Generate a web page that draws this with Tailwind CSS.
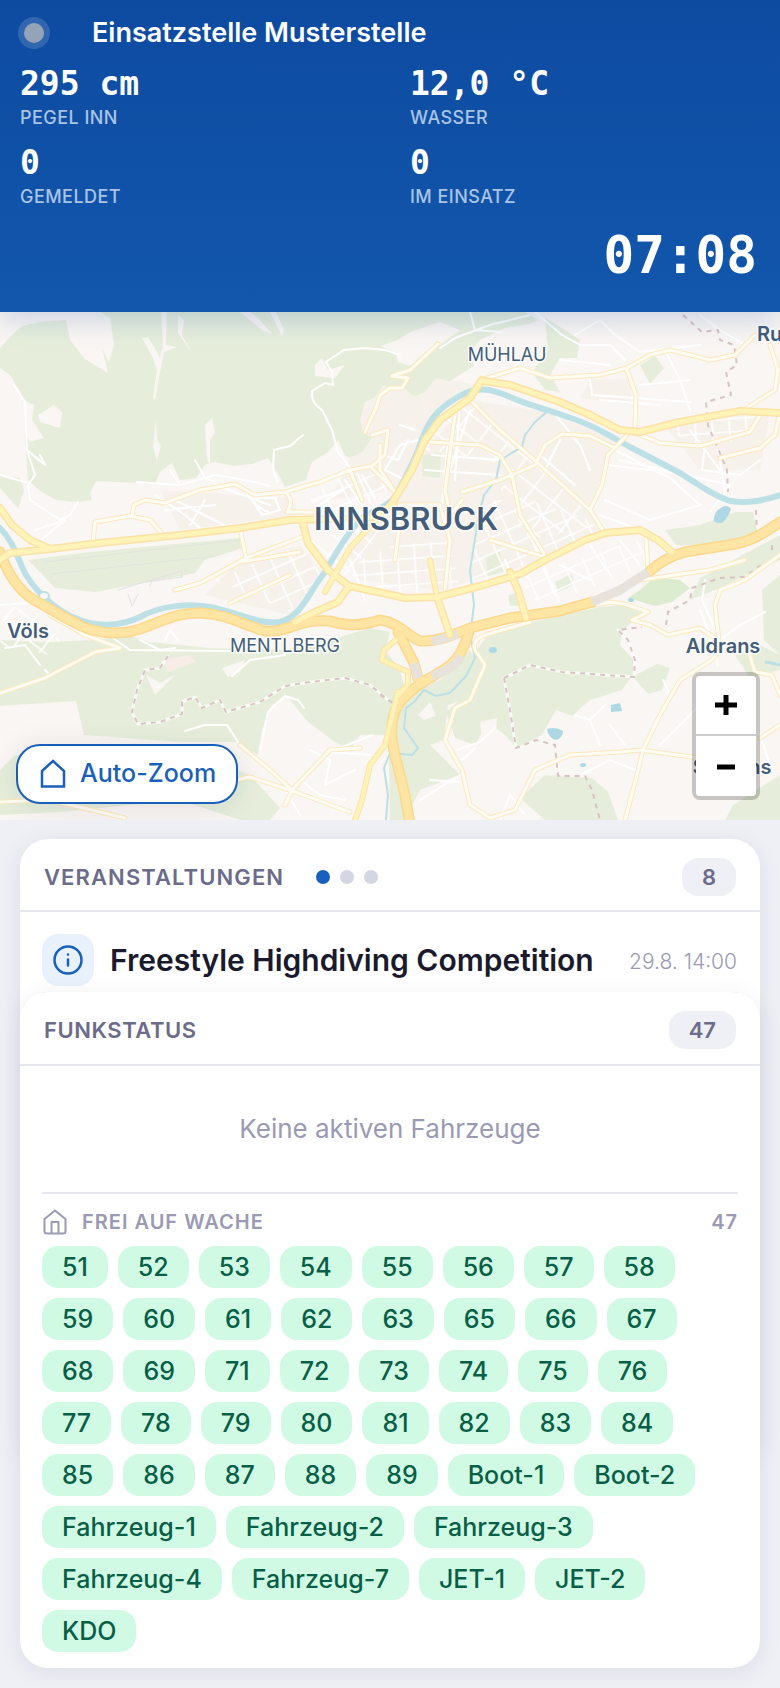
<!DOCTYPE html>
<html lang="de">
<head>
  <meta charset="UTF-8">
  <meta name="viewport" content="width=device-width, initial-scale=1.0">
  <title>Einsatzstelle Musterstelle</title>
  <script src="https://cdn.jsdelivr.net/npm/@tailwindcss/browser@4"></script>
</head>
<body class="font-['Inter',sans-serif] bg-[#eff0f6] text-[#1a1a2e]">
  <!-- Header -->
  <header class="relative z-10 bg-linear-to-b from-[#0d4ba1] to-[#1257ac] text-white px-5 pt-4 pb-7 shadow-[0_4px_30px_rgba(13,71,161,0.25)]">
    <div class="flex items-center gap-11 h-[34px]">
      <span class="size-5 m-1 rounded-full bg-[#94a3b8] ring-[6px] ring-white/15"></span>
      <h1 class="text-[27px] leading-[34px] font-semibold">Einsatzstelle Musterstelle</h1>
    </div>
    <dl class="grid grid-cols-2 gap-x-10 gap-y-[11px] mt-[14px]">
      <div class="flex flex-col-reverse">
        <dt class="text-lg leading-7 font-medium tracking-wide text-[#aac4e6]">PEGEL INN</dt>
        <dd class="font-['DejaVu_Sans_Mono',monospace] text-[33px] leading-10 font-bold">295 cm</dd>
      </div>
      <div class="flex flex-col-reverse">
        <dt class="text-lg leading-7 font-medium tracking-wide text-[#aac4e6]">WASSER</dt>
        <dd class="font-['DejaVu_Sans_Mono',monospace] text-[33px] leading-10 font-bold">12,0 °C</dd>
      </div>
      <div class="flex flex-col-reverse">
        <dt class="text-lg leading-7 font-medium tracking-wide text-[#aac4e6]">GEMELDET</dt>
        <dd class="font-['DejaVu_Sans_Mono',monospace] text-[33px] leading-10 font-bold">0</dd>
      </div>
      <div class="flex flex-col-reverse">
        <dt class="text-lg leading-7 font-medium tracking-wide text-[#aac4e6]">IM EINSATZ</dt>
        <dd class="font-['DejaVu_Sans_Mono',monospace] text-[33px] leading-10 font-bold">0</dd>
      </div>
    </dl>
    <time class="block mt-4 pr-[3px] text-right font-['DejaVu_Sans_Mono',monospace] text-[51px] leading-[57px] font-bold">07:08</time>
  </header>

  <!-- Map -->
  <section class="relative overflow-hidden" aria-label="Karte">
    <svg class="block w-full h-[508px]" viewBox="0 312 780 508" preserveAspectRatio="xMidYMid slice" fill="none" stroke-linejoin="round" stroke-linecap="round">
      <defs>
        <pattern id="blocks" width="17" height="13" patternUnits="userSpaceOnUse" patternTransform="rotate(-4)">
          <path d="M0 0H17M0 0V13" stroke="#fff" stroke-width="3"/>
        </pattern>
        <pattern id="blocks-tilt" width="19" height="15" patternUnits="userSpaceOnUse" patternTransform="rotate(-24)">
          <path d="M0 0H19M0 0V15" stroke="#fff" stroke-width="3"/>
        </pattern>
        <pattern id="blocks-diag" width="24" height="18" patternUnits="userSpaceOnUse" patternTransform="rotate(38)">
          <path d="M0 0H24M0 0V18" stroke="#fff" stroke-width="3"/>
        </pattern>
      </defs>
      <rect y="312" width="780" height="508" fill="#faf6f3"/>

      <!-- Built-up areas -->
      <g fill="#f7f1eb">
        <path d="M400 345L450 380 478 385 440 410 420 445 400 490 330 500 350 460 362 400Z"/>
        <path d="M425 450L470 400 545 412 615 440 590 510 600 530 545 560 440 590 360 580 345 550 395 500Z"/>
        <path d="M160 490L290 498 300 515 180 530Z"/>
        <path d="M235 565L300 545 325 575 290 615 205 595Z"/>
        <path d="M590 380L630 378 632 405 580 398Z"/>
        <path d="M660 420L770 412 760 470 700 470Z"/>
      </g>

      <!-- Forest and parks -->
      <g fill="#e6eedb">
        <path d="M22 326L40 322 66 320 70 340 85 359 108 373 102 348 109 362 114 345 110 318 100 312H525L538 320 530 324 505 328 480 340 470 352 474 366 450 381 436 378 425 392 414 396 406 390 400 385 390 390 384 385 374 398 365 402 360 420 363 432 372 438 362 452 350 458 345 456 338 440 328 452 312 462 306 480 285 487 276 470 268 458 252 464 233 466 214 462 206 464 196 478 180 480 172 463 160 472 155 484 138 483 96 481 90 494 92 500 78 502 56 500 40 491 28 480 26 452 22 395 10 375 0 368V348L12 335Z"/>
        <path d="M0 475L20 478 24 490 18 508 0 488Z"/>
        <path d="M545 318L565 330 580 340 577 358 560 358 550 375 560 392 545 390 532 372 548 350Z"/>
        <path d="M640 365L655 356 664 368 650 384Z"/>
        <path d="M28 560L90 552 240 538 243 548 205 560 195 573 160 580 95 592 55 588 40 572Z"/>
        <path d="M0 640L50 642 95 640 130 636 150 642 210 648 290 650 330 640 370 628 390 632 385 650 400 670 405 690 393 715 390 735 360 735 350 750 335 742 308 722 286 695 272 705 262 730 258 755 236 742 180 742 84 735 76 701 0 706Z"/>
        <path d="M0 770L15 755 85 745 180 748 250 775 280 808 270 820H240L180 800 60 812 0 815Z"/>
        <path d="M478 648L490 632 540 620 600 607 632 604 642 612 622 632 620 645 634 660 634 676 657 664 670 668 662 690 648 694 632 676 622 690 590 700 572 716 556 710 542 735 516 748 505 735 488 722 475 745 455 738 446 712 462 698 470 672Z"/>
        <path d="M520 798L545 775 592 778 608 792 618 820H545Z"/>
        <path d="M388 690L440 680 470 650 482 672 462 700 448 705 444 740 430 745 460 775 420 790 405 820H390Z"/>
        <path d="M665 530L700 525 735 512 753 512 757 532 710 546 676 545Z"/>
        <path d="M700 578L780 535V560L752 572 720 588 690 600Z"/>
        <path d="M762 590L780 575V655L764 640Z"/>
        <path d="M735 655L760 645 780 655V670L750 678Z"/>
        <path d="M733 805L780 775V820H725Z"/>
        <path d="M423 455L441 453 440 478 422 476Z"/>
        <path d="M485 555L500 552 504 572 488 576Z"/>
        <path d="M555 582L572 574 574 585 558 592Z"/>
        <path d="M508 595L516 593 518 606 510 606Z"/>
      </g>
      <path d="M640 590L655 577 680 580 690 588 672 602 655 606 628 598Z" fill="#dcedcf"/>

      <!-- Clearings in the forest -->
      <g fill="#faf6f3">
        <path d="M142 338L148 337 156 350 160 358 163 345 161 312H167L166 345 177 347 164 352 160 372 155 400 153 398 157 370 152 356Z"/>
        <path d="M178 315L184 320 182 335 191 352 178 333Z"/>
        <path d="M38 415L54 405 62 412 60 428 40 422Z"/>
        <path d="M23 400L34 405 32 420 44 438 30 442 20 425Z"/>
        <path d="M156 420L157 440 161 446 157 461 153 446Z"/>
        <path d="M205 425L212 418 215 432 210 440 210 465 207 460Z"/>
        <path d="M315 365L322 358 328 370 345 365 335 378 315 376Z"/>
        <path d="M380 346L398 340 410 332 440 322 460 330 440 345 425 352 410 366 398 362 395 352Z"/>
        <path d="M222 668L245 660 240 672 228 677Z"/>
        <path d="M146 675L160 683 176 674 155 695Z"/>
        <path d="M480 722L497 718 496 735 482 738Z"/>
        <path d="M418 715L430 702 436 716 424 720Z"/>
        <path d="M240 312L262 330 272 334 258 318 250 312ZM270 312L282 336 284 330 276 312Z"/>
      </g>
      <path d="M162 660L190 655 195 662 168 672Z" fill="#f7ece6"/>

      <!-- Street grids -->
      <path d="M360 560L395 545 450 540 460 590 400 596 350 582Z" fill="url(#blocks)"/>
      <path d="M480 500L530 500 590 520 600 532 545 560 470 588 475 540Z" fill="url(#blocks-tilt)"/>
      <path d="M425 450L440 420 470 402 540 465 515 485 490 460Z" fill="url(#blocks-diag)"/>
      <path d="M215 580L300 545 322 575 290 612Z" fill="url(#blocks-tilt)"/>
      <path d="M520 575L640 540 650 565 560 600 530 600Z" fill="url(#blocks-tilt)"/>
      <path d="M500 488L540 468 590 512 595 525 530 540Z" fill="url(#blocks-diag)"/>
      <path d="M660 420L755 414 745 440 690 445Z" fill="url(#blocks)"/>
      <path d="M5 605L35 612 60 640 50 655 0 645Z" fill="url(#blocks-diag)"/>
      <path d="M310 495L345 475 375 470 390 490 355 515 315 520Z" fill="url(#blocks-tilt)"/>
      <path d="M310 540L355 520 385 525 345 580Z" fill="url(#blocks-diag)"/>

      <!-- Airport -->
      <path d="M45 562L240 540M52 574L215 556" stroke="#e0e5dd" stroke-width="1"/>
      <path d="M118 590L145 582 182 577M128 594L132 606 138 594M150 586L152 580 182 571V577" stroke="#e3e1e3" stroke-width="1"/>

      <!-- Small roads -->
      <g stroke="#fff" stroke-width="2">
        <path d="M312 391L325 383 333 385 332 372 326 362 344 350 365 348 385 350 400 355M312 391Q310 402 322 410L332 430 338 452 345 460 350 468"/>
        <path d="M303 435L290 446 274 450 273 470 278 482"/>
        <path d="M137 482L180 485 215 475 245 480 270 486M195 460L205 478 215 482M180 485L170 470"/>
        <path d="M14 385L25 402 27 450 35 475 28 485 30 500 60 520 70 515 78 502M0 475L25 482M35 530L65 520 35 545M27 450L45 465 40 455"/>
        <path d="M155 495L185 515 200 528M175 500L230 528M165 510L215 505M205 500L190 525M270 505L215 485M245 490L262 515 280 510"/>
        <path d="M248 488Q250 505 268 512M255 498L275 498 280 510M312 500L340 492M320 505L350 485M345 480L362 505M362 475L375 498"/>
        <path d="M405 480L385 470 400 445 418 440M408 440L398 460 383 455M400 425L415 430"/>
        <path d="M440 348L455 338 490 325 530 315M470 312L475 330 500 332M535 312L562 335 580 345 610 345 625 360M575 335L600 320 615 335 640 352 700 345M560 360L610 365"/>
        <path d="M665 350L680 380 690 410M590 380L592 395 690 402M600 400L660 405M640 385L690 380M700 315L720 330 745 345"/>
        <path d="M615 450L670 478 700 505 650 520 605 500M620 460L730 485 710 512M608 465L690 475M600 515L640 530"/>
        <path d="M705 445L702 470 740 475 760 460M718 450L725 490M690 430L720 470"/>
        <path d="M460 400L455 480M425 470L500 475M432 455L500 460M448 440L442 505M470 410L450 470"/>
        <path d="M553 412L580 445 590 470M540 455L575 485M560 440L545 470"/>
        <path d="M185 731L205 725 227 725 240 745 250 752M260 750L268 712 285 696 298 700 304 708"/>
        <path d="M232 676L250 660 285 655M140 640L160 650 175 648M165 640L170 630 178 640"/>
        <path d="M0 605L30 603 70 615 110 636 130 650 230 651M40 665L25 645 5 648M45 670L50 676"/>
        <path d="M310 750L330 760 325 785 355 770M300 780L320 795 345 800M285 790L300 815M330 752L372 735M330 752L370 755"/>
        <path d="M457 750L480 742 495 728M462 760L475 748M430 780L460 782M420 800L460 775M575 715L590 720 600 745M590 720L605 705M610 725L625 745"/>
        <path d="M700 610L712 640 718 665M720 640L740 625 765 612M705 580L702 600 720 640M663 680L670 695M660 745L700 705M500 820L510 795 525 815M580 775L610 760 635 770M760 735L770 765"/>
        <path d="M505 560L520 595M530 535L555 595M560 565L590 580M590 545L610 575M620 540L640 565M350 560L365 600"/>
      </g>

      <!-- Municipal boundaries -->
      <g stroke="#fff" stroke-opacity=".7" stroke-width="3">
        <path d="M168 656L160 668 145 670 137 690 132 712 138 724 160 722 182 714 182 702 195 697 202 708 220 700 226 712 260 702 285 686 310 682 345 678 370 685 393 704"/>
        <path d="M504 678L530 665 562 672 634 677 635 660 628 640 618 630M504 678L510 710 516 748"/>
      </g>
      <g stroke="#d8c3c3" stroke-width="2" stroke-dasharray="5 5" stroke-linecap="butt">
        <path d="M168 656L160 668 145 670 137 690 132 712 138 724 160 722 182 714 182 702 195 697 202 708 220 700 226 712 260 702 285 686 310 682 345 678 370 685 393 704"/>
        <path d="M504 678L530 665 562 672 634 677 635 660 628 640 618 630 642 627M504 678L510 710 516 748 536 740 555 745 558 776 585 776 592 790 600 820"/>
        <path d="M683 315L702 332 718 330 720 340 734 345 737 365 726 372 731 395 706 402 708 425 727 470 728 492M756 510L757 538M772 545V555"/>
        <path d="M666 625L668 612 690 600 692 588 720 578 745 577 762 564M380 695L395 704"/>
      </g>

      <!-- Rivers and lakes -->
      <g stroke="#bde0e6">
        <path d="M0 528C14 542 18 560 26 575C40 597 60 612 75 618C95 628 122 626 140 617C160 606 190 602 215 608C240 614 262 625 280 622C302 616 306 596 325 572C338 550 350 528 365 516C378 508 388 506 394 498C405 478 410 470 418 450C428 420 436 410 458 397C475 386 490 388 510 397C530 406 550 410 562 415C590 424 600 430 630 447L680 473C700 486 715 496 730 501C750 504 765 500 780 495" stroke-width="6"/>
        <path d="M549 410L535 422 525 435 522 447 500 460 496 480 484 495 478 520 474 545 470 570 474 605 470 635 475 658 466 676 450 693 436 696 424 690 414 702 406 708 404 728 418 748 412 755 390 753 384 768 388 795 386 820" stroke-width="2"/>
        <path d="M766 662L780 665" stroke-width="3"/>
      </g>
      <g fill="#aed9e4">
        <path d="M716 512Q726 502 731 509 728 518 722 523 712 524 714 517Z"/>
        <path d="M547 729Q556 726 563 731 563 738 556 740 548 738 547 729Z"/>
        <path d="M611 705L620 703 622 711 611 712Z"/>
        <ellipse cx="493" cy="650" rx="4" ry="3"/>
        <ellipse cx="631" cy="600" rx="3" ry="2"/>
        <ellipse cx="583" cy="765" rx="3" ry="2"/>
        <ellipse cx="44" cy="596" rx="5" ry="4" fill="#faf6f3" stroke="#bde0e6" stroke-width="2"/>
      </g>

      <!-- Local roads: casing, then fill -->
      <g stroke="#fce8bd" stroke-width="5">
        <path d="M132 516L134 505 145 500 165 503 200 490 235 484 255 495 285 492 320 482 350 470 372 466 385 455 388 430 372 435M93 543L95 522 130 516 150 520 165 537M285 492Q295 500 287 512H320M390 388L402 388 408 378 392 376 410 370 438 344M365 432L376 408 380 395 390 388M350 470L362 500M372 468L395 492M484 379L520 368 550 378 600 375 627 368 650 355 670 350 710 360 735 355 755 335M627 370L636 395 635 428M633 432L660 443 700 446 750 432 762 412M720 458L760 448 775 435 780 412M770 345L778 370 775 390 742 411"/>
        <path d="M470 400L500 430 540 465 590 510 606 535M430 442L480 445 500 455 512 475 520 515 545 555M462 492L500 480 535 465 545 445 562 434 590 436 615 448M628 434L608 455 602 485 590 510M455 415L445 490 450 515 462 500M240 528L246 558 302 537M215 575L246 558M380 445V470L395 492M393 505L440 505 450 540 445 590M490 540L545 557M400 520L395 560M646 538L648 570M175 590L200 583 240 562 300 552M230 603L290 575"/>
        <path d="M0 693L45 678 95 652 120 648 85 635 50 615M236 780L250 777 290 790 350 812M240 745L270 770 292 790 330 750 360 748M0 802L50 800 125 818M292 790L285 805"/>
        <path d="M525 618L570 610 610 602 625 604 648 612 632 620 650 625 668 635 700 628 718 640M530 622L485 635Q472 640 475 650L485 665 470 700 455 708 445 740 462 770 470 805 490 818 515 810 535 770 570 755 620 752 640 750 700 758M643 750L660 715 680 680 712 660 720 650 715 605 720 590 745 580 780 555M643 750L637 775 625 820M640 580L710 570 745 560M748 650L755 672 772 675 780 695M760 738L780 725"/>
      </g>
      <g stroke="#fffdf3" stroke-width="3">
        <path d="M132 516L134 505 145 500 165 503 200 490 235 484 255 495 285 492 320 482 350 470 372 466 385 455 388 430 372 435M93 543L95 522 130 516 150 520 165 537M285 492Q295 500 287 512H320M390 388L402 388 408 378 392 376 410 370 438 344M365 432L376 408 380 395 390 388M350 470L362 500M372 468L395 492M484 379L520 368 550 378 600 375 627 368 650 355 670 350 710 360 735 355 755 335M627 370L636 395 635 428M633 432L660 443 700 446 750 432 762 412M720 458L760 448 775 435 780 412M770 345L778 370 775 390 742 411"/>
        <path d="M470 400L500 430 540 465 590 510 606 535M430 442L480 445 500 455 512 475 520 515 545 555M462 492L500 480 535 465 545 445 562 434 590 436 615 448M628 434L608 455 602 485 590 510M455 415L445 490 450 515 462 500M240 528L246 558 302 537M215 575L246 558M380 445V470L395 492M393 505L440 505 450 540 445 590M490 540L545 557M400 520L395 560M646 538L648 570M175 590L200 583 240 562 300 552M230 603L290 575"/>
        <path d="M0 693L45 678 95 652 120 648 85 635 50 615M236 780L250 777 290 790 350 812M240 745L270 770 292 790 330 750 360 748M0 802L50 800 125 818M292 790L285 805"/>
        <path d="M525 618L570 610 610 602 625 604 648 612 632 620 650 625 668 635 700 628 718 640M530 622L485 635Q472 640 475 650L485 665 470 700 455 708 445 740 462 770 470 805 490 818 515 810 535 770 570 755 620 752 640 750 700 758M643 750L660 715 680 680 712 660 720 650 715 605 720 590 745 580 780 555M643 750L637 775 625 820M640 580L710 570 745 560M748 650L755 672 772 675 780 695M760 738L780 725"/>
      </g>

      <!-- Motorway -->
      <g stroke="#fbd88c" stroke-width="11">
        <path d="M0 552C8 575 18 590 34 600C60 614 75 625 92 630C112 635 130 634 148 626C165 620 180 612 200 613C228 614 240 624 265 631C285 634 300 618 330 621C348 627 365 625 380 620C398 622 408 636 420 641C438 642 450 636 470 628L510 618 560 611 592 602M650 571C660 562 670 556 685 552L735 544C755 540 765 532 780 522M398 632L414 663 418 678M470 628C464 650 458 662 440 672C425 680 410 690 400 702C390 716 390 735 395 755L405 795 410 824"/>
      </g>
      <g stroke="#ffe5a3" stroke-width="8">
        <path d="M0 552C8 575 18 590 34 600C60 614 75 625 92 630C112 635 130 634 148 626C165 620 180 612 200 613C228 614 240 624 265 631C285 634 300 618 330 621C348 627 365 625 380 620C398 622 408 636 420 641C438 642 450 636 470 628L510 618 560 611 592 602M650 571C660 562 670 556 685 552L735 544C755 540 765 532 780 522M398 632L414 663 418 678M470 628C464 650 458 662 440 672C425 680 410 690 400 702C390 716 390 735 395 755L405 795 410 824"/>
      </g>
      <path d="M592 602L620 590 648 572M432 642L458 634M414 663L418 678M432 676Q455 668 461 656" stroke="#e7e3dc" stroke-width="9" stroke-linecap="butt"/>

      <!-- Main roads -->
      <g stroke="#fce2a6" stroke-width="8">
        <path d="M0 508L12 525 30 540 50 549 100 543 180 535 240 528 290 520 330 519M0 560L10 553 50 549M302 520L308 543 328 570 349 586 378 592 405 598 437 597 480 586 520 574 545 560 585 540 605 533 640 530 658 540 672 552M349 586L338 602 315 612 295 622M394 500L412 470 425 440 440 420 470 398 482 380M484 381L510 385 560 402 590 415 620 430 640 432 680 422 740 411 780 413M510 572L518 590 526 618M437 597L450 635"/>
        <path d="M325 592L350 548 376 520 394 500M330 519L370 518 395 505M430 560L437 597M398 692L385 745 370 765 362 800 355 820M396 640L384 650 382 660 408 672 408 684 398 696" stroke-width="6"/>
      </g>
      <g stroke="#fff3b8" stroke-width="5">
        <path d="M0 508L12 525 30 540 50 549 100 543 180 535 240 528 290 520 330 519M0 560L10 553 50 549M302 520L308 543 328 570 349 586 378 592 405 598 437 597 480 586 520 574 545 560 585 540 605 533 640 530 658 540 672 552M349 586L338 602 315 612 295 622M394 500L412 470 425 440 440 420 470 398 482 380M484 381L510 385 560 402 590 415 620 430 640 432 680 422 740 411 780 413M510 572L518 590 526 618M437 597L450 635"/>
        <path d="M325 592L350 548 376 520 394 500M330 519L370 518 395 505M430 560L437 597M398 692L385 745 370 765 362 800 355 820M396 640L384 650 382 660 408 672 408 684 398 696" stroke-width="4"/>
      </g>

      <!-- Place names -->
      <g class="font-['Inter',sans-serif]" fill="#435d7b" stroke="#fff" stroke-opacity=".8" stroke-width="3" paint-order="stroke" text-anchor="middle">
        <text x="507" y="361" font-size="18">MÜHLAU</text>
        <text x="406" y="530" font-size="31" font-weight="600">INNSBRUCK</text>
        <text x="285" y="652" font-size="18">MENTLBERG</text>
        <text x="28" y="638" font-size="20" font-weight="600">Völs</text>
        <text x="723" y="653" font-size="20" font-weight="600">Aldrans</text>
        <text x="732" y="774" font-size="20" font-weight="600">Sistrans</text>
        <text x="757" y="341" font-size="20" font-weight="600" text-anchor="start">Ru</text>
      </g>
    </svg>

    <button type="button" class="absolute left-4 bottom-4 flex items-center gap-3 h-[60px] px-5 rounded-3xl border-2 border-[#1a5fb8] bg-white text-[25px] font-medium text-[#1a5fb8] shadow-[0_4px_30px_rgba(20,30,60,0.1)]">
      <svg class="w-[30px] h-8" viewBox="0 0 30 32" fill="none" stroke="currentColor" stroke-width="2.5">
        <path d="M4 28.500V13L15 3L26 13V28.500Z"/>
      </svg>
      Auto-Zoom
    </button>

    <div class="absolute right-5 bottom-5 w-17 rounded-lg border-4 border-black/20 bg-clip-padding overflow-hidden">
      <button type="button" aria-label="Vergrößern" class="flex items-center justify-center w-full h-[60px] bg-white border-b-2 border-[#ccc]">
        <svg class="size-6" viewBox="0 0 24 24" stroke="#000" stroke-width="5"><path d="M1 12H23M12 2V22"/></svg>
      </button>
      <button type="button" aria-label="Verkleinern" class="flex items-center justify-center w-full h-[60px] bg-white">
        <svg class="size-6" viewBox="0 0 24 24" stroke="#000" stroke-width="5"><path d="M3 13H21"/></svg>
      </button>
    </div>
  </section>

  <main class="px-5 pt-[19px] pb-5">
    <!-- Events, partly covered by the radio status card -->
    <div class="h-[153px]">
      <section class="h-[620px] rounded-[28px] bg-white shadow-[0_4px_24px_rgba(26,26,46,0.08)]">
        <header class="flex items-center h-[73px] px-6 pt-1 border-b-2 border-[#e6e7ef]">
          <h2 class="text-[22px] leading-7 font-semibold tracking-wider text-[#6b6b8a]">VERANSTALTUNGEN</h2>
          <div class="flex gap-[10px] ml-8">
            <span class="size-[14px] rounded-full bg-[#1860bd]"></span>
            <span class="size-[14px] rounded-full bg-[#d5d6e3]"></span>
            <span class="size-[14px] rounded-full bg-[#d5d6e3]"></span>
          </div>
          <span class="ml-auto px-5 rounded-2xl bg-[#eff0f6] text-[22px] leading-[38px] font-semibold text-[#6b6b8a]">8</span>
        </header>
        <article class="flex items-center gap-4 h-[81px] mx-[22px] pt-[15px] border-b border-[#e6e7ef]">
          <span class="flex items-center justify-center size-[52px] rounded-2xl bg-[#e8f1fc] text-[#1860bd]">
            <svg class="size-8" viewBox="0 0 32 32" fill="none" stroke="currentColor" stroke-width="2.500" stroke-linecap="round">
              <circle cx="16" cy="16" r="13.500"/>
              <path d="M16 15.500V21.500M16 10.500V10.600"/>
            </svg>
          </span>
          <h3 class="text-[30px] leading-9 font-semibold">Freestyle Highdiving Competition</h3>
          <time class="ml-auto pr-px mt-1 text-[21px] font-light text-[#9a9ab4]">29.8. 14:00</time>
        </article>
      </section>
    </div>

    <!-- Radio status -->
    <section class="relative rounded-[28px] bg-white pb-4 shadow-[0_4px_24px_rgba(26,26,46,0.08)]">
      <header class="flex items-center h-[74px] px-6 pt-1 border-b-2 border-[#e6e7ef]">
        <h2 class="text-[22px] leading-7 font-semibold tracking-wide text-[#6b6b8a]">FUNKSTATUS</h2>
        <span class="ml-auto px-5 rounded-2xl bg-[#eff0f6] text-[22px] leading-[38px] font-semibold text-[#6b6b8a]">47</span>
      </header>
      <p class="py-11 text-center text-[26px] leading-[38px] text-[#9a9ab4]">Keine aktiven Fahrzeuge</p>
      <div class="mx-[22px] border-t-2 border-[#e6e7ef] pt-3">
        <div class="flex items-center h-8 mb-2 text-[#9a9ab4]">
          <svg class="size-[26px]" viewBox="0 0 26 26" fill="none" stroke="currentColor" stroke-width="2" stroke-linejoin="round">
            <path d="M2.500 10L13 1.500L23.500 10V22Q23.500 24.500 21 24.500H5Q2.500 24.500 2.500 22Z"/>
            <path d="M9.500 24.500V13H16.500V24.500"/>
          </svg>
          <h3 class="ml-[14px] text-xl font-semibold tracking-wider">FREI AUF WACHE</h3>
          <span class="ml-auto text-xl font-semibold tracking-wider">47</span>
        </div>
        <ul class="flex flex-wrap gap-[10px] text-[25px] font-medium text-[#065f46] *:px-5 *:h-[42px] *:leading-[42px] *:rounded-2xl *:bg-[#d1fae5]">
          <li>51</li>
          <li>52</li>
          <li>53</li>
          <li>54</li>
          <li>55</li>
          <li>56</li>
          <li>57</li>
          <li>58</li>
          <li>59</li>
          <li>60</li>
          <li>61</li>
          <li>62</li>
          <li>63</li>
          <li>65</li>
          <li>66</li>
          <li>67</li>
          <li>68</li>
          <li>69</li>
          <li>71</li>
          <li>72</li>
          <li>73</li>
          <li>74</li>
          <li>75</li>
          <li>76</li>
          <li>77</li>
          <li>78</li>
          <li>79</li>
          <li>80</li>
          <li>81</li>
          <li>82</li>
          <li>83</li>
          <li>84</li>
          <li>85</li>
          <li>86</li>
          <li>87</li>
          <li>88</li>
          <li>89</li>
          <li>Boot-1</li>
          <li>Boot-2</li>
          <li>Fahrzeug-1</li>
          <li>Fahrzeug-2</li>
          <li>Fahrzeug-3</li>
          <li>Fahrzeug-4</li>
          <li>Fahrzeug-7</li>
          <li>JET-1</li>
          <li>JET-2</li>
          <li>KDO</li>
        </ul>
      </div>
    </section>
  </main>
</body>
</html>
